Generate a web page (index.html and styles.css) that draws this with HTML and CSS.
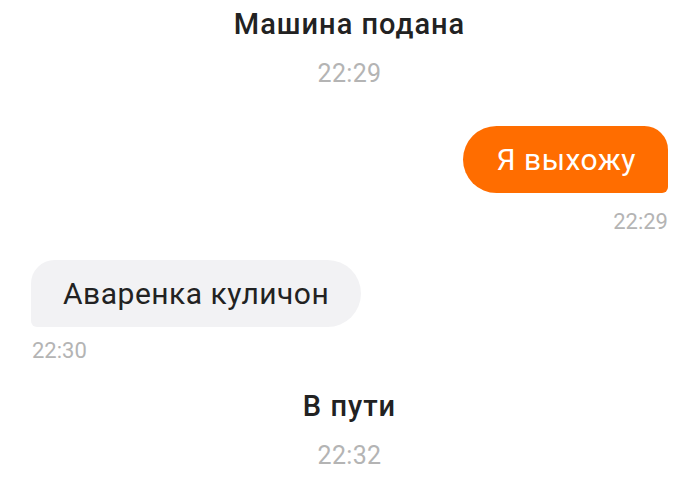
FILE: index.html
```html
<!DOCTYPE html>
<html lang="ru">
<head>
  <meta charset="UTF-8">
  <meta name="viewport" content="width=device-width, initial-scale=1.0">
  <title>Чат</title>
  <link rel="stylesheet" href="styles.css">
</head>
<body>

  <main class="chat">
    <!-- Статус поездки -->
    <div class="event">
      <div class="event-title">Машина подана</div>
      <div class="event-time">22:29</div>
    </div>

    <div class="msg out">
      <div class="bubble">Я выхожу</div>
      <div class="msg-time">22:29</div>
    </div>

    <div class="msg in">
      <div class="bubble">Аваренка куличон</div>
      <div class="msg-time">22:30</div>
    </div>

    <div class="event second">
      <div class="event-title">В пути</div>
      <div class="event-time">22:32</div>
    </div>
  </main>

</body>
</html>
```

FILE: styles.css
```css
* {
  margin: 0;
  padding: 0;
  box-sizing: border-box;
}

body {
  font-family: Roboto, "Noto Sans", Arial, sans-serif;
  background: #fff;
  color: #222;
  overflow: hidden;
}

.chat {
  display: flex;
  flex-direction: column;
  padding: 8px 32px 0 31px;
}

.event {
  display: flex;
  flex-direction: column;
  align-items: center;
}

.event.second {
  margin-top: 26px;
}

.event-title {
  font-size: 29px;
  line-height: 33px;
  font-weight: 500;
  letter-spacing: 1px;
  color: #222;
}

.event-time {
  margin-top: 18px;
  font-size: 25px;
  line-height: 29px;
  letter-spacing: 0.3px;
  color: #b4b4b4;
}

.msg {
  display: flex;
  flex-direction: column;
}

.msg.out {
  align-items: flex-end;
  margin-top: 38px;
}

.msg.in {
  align-items: flex-start;
  margin-top: 25px;
}

.bubble {
  font-size: 30px;
  line-height: 36px;
  letter-spacing: 0.5px;
  padding: 16px 32px 15px 33px;
}

.msg.out .bubble {
  background: #ff6d00;
  color: #fff;
  border-radius: 34px 24px 6px 34px;
}

.msg.in .bubble {
  background: #f2f2f4;
  color: #222;
  padding-left: 32px;
  border-radius: 24px 34px 34px 6px;
}

.msg-time {
  font-size: 22px;
  line-height: 26px;
  color: #b4b4b4;
}

.msg.out .msg-time {
  margin-top: 16px;
}

.msg.in .msg-time {
  margin-top: 11px;
  margin-left: 1px;
}
```
